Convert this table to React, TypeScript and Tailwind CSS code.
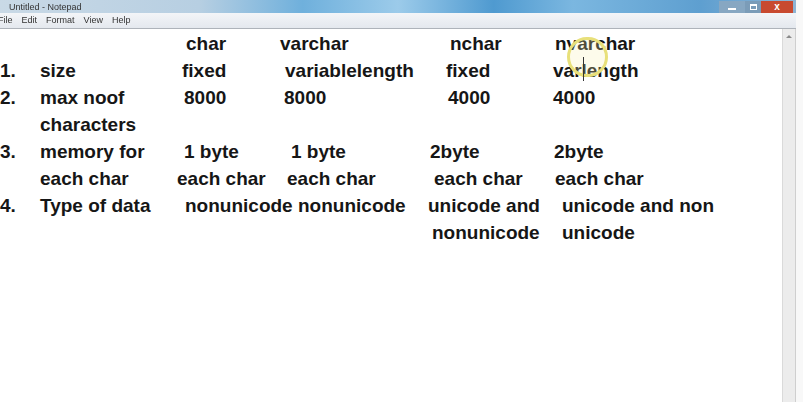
import React from 'react';

type Cell = { text: string; pad: string };

const font = { fontFamily: '"Liberation Sans", Arial, sans-serif' };

// each row: number, label, char, varchar, nchar, nvarchar
const rows: { num: string; label: string; cells: Cell[] }[] = [
  { num: '', label: '', cells: [{ text: 'char', pad: 'pl-[9px]' }, { text: 'varchar', pad: 'pl-0' }, { text: 'nchar', pad: 'pl-[22px]' }, { text: 'nvarchar', pad: 'pl-[2px]' }] },
  { num: '1.', label: 'size', cells: [{ text: 'fixed', pad: 'pl-[5px]' }, { text: 'variablelength', pad: 'pl-[5px]' }, { text: 'fixed', pad: 'pl-[18px]' }, { text: 'varlength', pad: 'pl-0' }] },
  { num: '2.', label: 'max noof', cells: [{ text: '8000', pad: 'pl-[7px]' }, { text: '8000', pad: 'pl-[4px]' }, { text: '4000', pad: 'pl-[20px]' }, { text: '4000', pad: 'pl-0' }] },
  { num: '', label: 'characters', cells: [] },
  { num: '3.', label: 'memory for', cells: [{ text: '1 byte', pad: 'pl-[7px]' }, { text: '1 byte', pad: 'pl-[11px]' }, { text: '2byte', pad: 'pl-[2px]' }, { text: '2byte', pad: 'pl-[1px]' }] },
  { num: '', label: 'each char', cells: [{ text: 'each char', pad: 'pl-0' }, { text: 'each char', pad: 'pl-[7px]' }, { text: 'each char', pad: 'pl-[6px]' }, { text: 'each char', pad: 'pl-[2px]' }] },
  { num: '4.', label: 'Type of data', cells: [{ text: 'nonunicode', pad: 'pl-[8px]' }, { text: 'nonunicode', pad: 'pl-[18px]' }, { text: 'unicode and', pad: 'pl-0' }, { text: 'unicode and non', pad: 'pl-[9px]' }] },
  { num: '', label: '', cells: [{ text: '', pad: 'pl-0' }, { text: '', pad: 'pl-0' }, { text: 'nonunicode', pad: 'pl-[4px]' }, { text: 'unicode', pad: 'pl-[9px]' }] },
];

export default function App() {
  return (
    <div className="w-[803px] h-[402px] bg-white overflow-hidden flex relative">
      <div className="w-[796px] flex flex-col">
        {/* title bar */}
        <div className="h-[13px] flex items-end bg-[linear-gradient(90deg,#c9d9e6_0%,#b7cfe2_25%,#6fb0dc_38%,#9ccbea_50%,#4f9ad0_62%,#7bb7e0_72%,#5e9fd0_88%,#8eb4d4_100%)]">
          <span className="pl-[9px] text-[9px] leading-[12px] text-[#333] blur-[0.3px]" style={font}>Untitled - Notepad</span>
          <div className="flex-1" />
          <div className="w-[26px] h-[12px] bg-[#87a7c2] flex items-end justify-center pb-[3px]">
            <div className="w-[8px] h-[2px] bg-white" />
          </div>
          <div className="w-[16px] h-[12px] bg-[#7b9cb8] flex items-center justify-center">
            <div className="w-[7px] h-[6px] border border-white border-t-2" />
          </div>
          <div className="w-[32px] h-[12px] bg-[#c84a30] flex items-center justify-center text-white text-[10px] font-bold leading-none" style={font}>x</div>
          <div className="w-[3px]" />
        </div>
        {/* menu bar */}
        <div className="h-[16px] bg-[linear-gradient(180deg,#f3f5f8,#e4e8ee)] border-b border-[#aeb3ba] flex items-center gap-[9px] text-[9px] text-[#333] -ml-[2px] blur-[0.3px]" style={font}>
          <span>File</span>
          <span>Edit</span>
          <span>Format</span>
          <span>View</span>
          <span>Help</span>
        </div>
        {/* text area + scrollbar */}
        <div className="flex-1 flex">
          <div className="flex-1 pt-[1px] relative text-[19px] leading-[27px] font-bold text-[#161616] whitespace-nowrap" style={font}>
            {rows.map((r, i) => (
              <div key={i} className="grid grid-cols-[40px_137px_103px_148px_125px_1fr] h-[27px]">
                <span>{r.num}</span>
                <span>{r.label}</span>
                {r.cells.map((c, j) => (
                  <span key={j} className={c.pad}>{c.text}</span>
                ))}
              </div>
            ))}
            {/* mouse highlight + caret */}
            <div className="absolute left-[567px] top-[8px] w-[41px] h-[40px] rounded-full border-[3px] border-[#e8e07a] bg-[#f6f1b0]/25" />
            <div className="absolute left-[583px] top-[28px] w-[1px] h-[24px] bg-[#333]" />
          </div>
          <div className="w-[14px] bg-[#ececec] border-l border-[#dadada] border-r border-r-[#cfcfcf] flex flex-col items-center">
            <div className="w-full h-[14px] flex items-center justify-center">
              <div className="w-0 h-0 border-l-[3px] border-r-[3px] border-b-[3px] border-l-transparent border-r-transparent border-b-[#8a8a8a]" />
            </div>
          </div>
        </div>
      </div>
      <div className="flex-1 bg-[#f8f8f8]" />
    </div>
  );
}
